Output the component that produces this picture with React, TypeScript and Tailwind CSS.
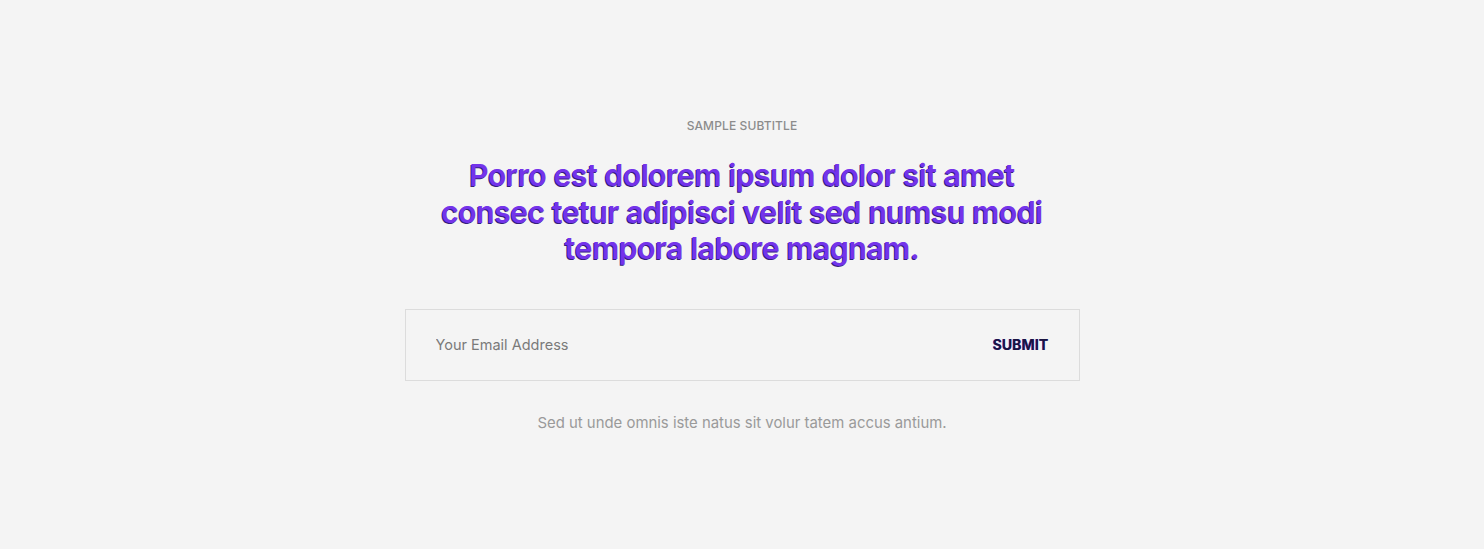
import React from "react";

export default function App() {
  return (
    <div className="min-h-[549px] w-full bg-[#f4f4f4] flex flex-col items-center pt-[117px] font-['Inter','Noto_Sans',sans-serif]">
      <p className="text-[12px] leading-[18px] font-medium uppercase tracking-[0.01em] text-[#8c8c8c]">
        Sample Subtitle
      </p>
      <h2 className="mt-[22px] max-w-[625px] text-center text-[30px] leading-[36.5px] font-semibold tracking-[-0.012em] text-[#7433ea] [text-shadow:-1px_1px_0_#33207a]">
        Porro est dolorem ipsum dolor sit amet consec tetur adipisci velit sed numsu modi tempora labore magnam.
      </h2>
      <form
        className="mt-[42px] w-[675px] h-[72px] border border-[#dcdcdc] flex items-center justify-between pl-[30px] pr-[30px]"
        onSubmit={(e) => e.preventDefault()}
      >
        <input
          type="email"
          placeholder="Your Email Address"
          className="flex-1 bg-transparent outline-none text-[14.5px] text-[#555] placeholder:text-[#7a7a7a]"
        />
        <button
          type="submit"
          className="text-[14px] font-bold tracking-[0.01em] text-[#1a1440] [text-shadow:-0.5px_0_0_#5b3de0]"
        >
          SUBMIT
        </button>
      </form>
      <p className="mt-[32px] text-[14.9px] leading-[20px] text-[#9a9a9a]">
        Sed ut unde omnis iste natus sit volur tatem accus antium.
      </p>
    </div>
  );
}
